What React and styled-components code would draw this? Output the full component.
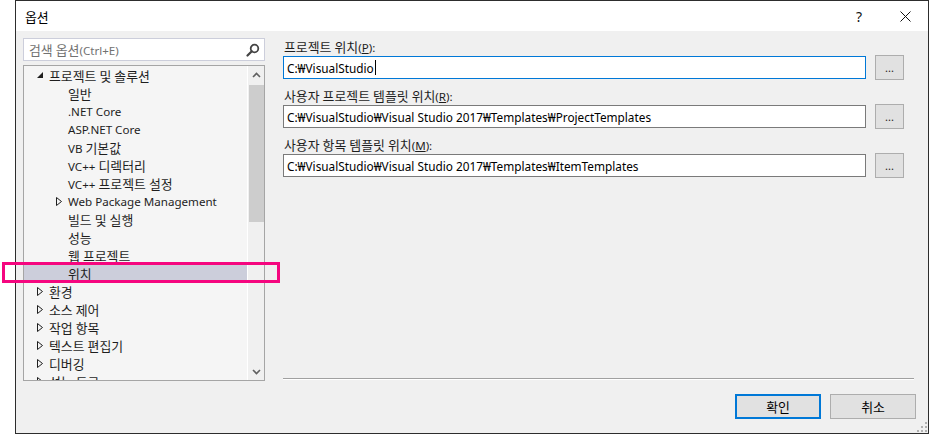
import React from "react";
import styled, { createGlobalStyle } from "styled-components";

const Global = createGlobalStyle`
  html, body { margin: 0; padding: 0; background: #ffffff; }
  body { font-family: "Noto Sans", "Noto Sans CJK KR", sans-serif; font-size: 11.6px; color: #1e1e1e; }
  * { box-sizing: border-box; }
`;

const Page = styled.div`
  position: relative;
  width: 929px;
  height: 434px;
  padding-left: 15px;
`;

const Window = styled.div`
  width: 914px;
  height: 434px;
  border: 1px solid #2d2d2d;
  display: flex;
  flex-direction: column;
  background: #f0f0f0;
`;

const TitleBar = styled.div`
  height: 30px;
  background: #ffffff;
  display: flex;
  align-items: center;
  padding-left: 9px;
  flex-shrink: 0;
`;

const Title = styled.div`
  flex: 1;
  color: #000;
`;

const TitleButton = styled.div`
  width: 46px;
  height: 30px;
  display: flex;
  align-items: center;
  justify-content: center;
  font-size: 14px;
  color: #111;
`;

const Hangul = styled.span`
  font-family: "Noto Sans CJK KR", sans-serif;
  font-size: 12.9px;
`;

const Main = styled.div`
  display: flex;
  gap: 18px;
  padding: 7px 14px 0 7px;
  height: 350px;
`;

const LeftCol = styled.div`
  width: 242px;
  display: flex;
  flex-direction: column;
  gap: 4px;
`;

const Search = styled.div`
  height: 23px;
  border: 1px solid #cccedb;
  background: #ffffff;
  display: flex;
  align-items: center;
  padding: 0 4px 0 5px;
`;

const Placeholder = styled.div`
  flex: 1;
  color: #717171;
`;

const Tree = styled.div`
  height: 316px;
  border: 1px solid #a5a5a5;
  background: #f5f5f5;
  display: flex;
  overflow: hidden;
`;

const TreeList = styled.div`
  flex: 1;
  overflow: hidden;
`;

const Row = styled.div`
  height: 18px;
  display: flex;
  align-items: center;
  padding-left: ${(p) => p.$indent}px;
  background: ${(p) => (p.$selected ? "#cccedb" : "transparent")};
  white-space: nowrap;
  color: #1e1e1e;
`;

const Expander = styled.span`
  width: 12px;
  flex-shrink: 0;
  display: inline-flex;
  align-items: center;
  justify-content: flex-start;
`;

const Scrollbar = styled.div`
  width: 17px;
  background: #f0f0f0;
  border-left: 1px solid #ffffff;
  display: flex;
  flex-direction: column;
  align-items: center;
`;

const ScrollArrow = styled.div`
  height: 17px;
  width: 100%;
  display: flex;
  align-items: center;
  justify-content: center;
`;

const Thumb = styled.div`
  width: 15px;
  height: 137px;
  margin-top: 2px;
  background: #cdcdcd;
`;

const ScrollSpacer = styled.div`
  flex: 1;
`;

const RightCol = styled.div`
  flex: 1;
  display: flex;
  flex-direction: column;
`;

const Field = styled.div`
  margin-right: 10px;
  margin-bottom: 7px;
`;

const Label = styled.div`
  height: 17px;
  line-height: 17px;
  color: #1e1e1e;
  padding-left: 1px;
  white-space: nowrap;
`;

const U = styled.span`
  text-decoration: underline;
`;

const InputRow = styled.div`
  height: 25px;
  display: flex;
  align-items: center;
  gap: 9px;
`;

const Input = styled.div`
  flex: 1;
  height: 23px;
  background: #ffffff;
  border: 1px solid ${(p) => (p.$focused ? "#0078d7" : "#7a7a7a")};
  display: flex;
  align-items: center;
  padding-left: 3px;
  font-size: 11.8px;
  color: #000;
  white-space: nowrap;
`;

const Caret = styled.span`
  display: inline-block;
  width: 1px;
  height: 15px;
  background: #000;
  margin-left: 1px;
`;

const BrowseButton = styled.div`
  width: 29px;
  height: 25px;
  background: #e1e1e1;
  border: 1px solid #adadad;
  display: flex;
  align-items: flex-end;
  justify-content: center;
  padding-bottom: 6px;
  font-size: 11px;
  line-height: 1;
`;

const Separator = styled.div`
  margin-top: auto;
  margin-bottom: 2px;
  height: 1px;
  background: #a0a0a0;
  box-shadow: 0 1px 0 #ffffff;
`;

const Footer = styled.div`
  position: relative;
  flex: 1;
  display: flex;
  justify-content: flex-end;
  align-items: flex-start;
  gap: 9px;
  padding: 13px 12px 0 0;
`;

const DialogButton = styled.div`
  width: 86px;
  height: 25px;
  background: #e1e1e1;
  border: ${(p) => (p.$default ? "2px solid #0078d7" : "1px solid #adadad")};
  display: flex;
  align-items: center;
  justify-content: center;
  color: #000;
`;

const Grip = styled.svg`
  position: absolute;
  right: 1px;
  bottom: 1px;
`;

const Annotation = styled.div`
  position: absolute;
  left: 2px;
  top: 262px;
  width: 278px;
  height: 21px;
  border: 3px solid #f5067f;
  pointer-events: none;
`;

const T = ({ children }) => {
  const parts = String(children).split(/([\uAC00-\uD7A3]+)/);
  return (
    <>
      {parts.map((p, i) =>
        /[\uAC00-\uD7A3]/.test(p) ? <Hangul key={i}>{p}</Hangul> : p
      )}
    </>
  );
};

const ExpandedTri = () => (
  <svg width="6" height="6" viewBox="0 0 6 6">
    <polygon points="6,0 6,6 0,6" fill="#1e1e1e" />
  </svg>
);

const CollapsedTri = () => (
  <svg width="6" height="9" viewBox="0 0 6 9">
    <polygon points="0.5,0.5 5.5,4.5 0.5,8.5" fill="none" stroke="#1e1e1e" strokeWidth="1" />
  </svg>
);

const Chevron = ({ up }) => (
  <svg width="9" height="6" viewBox="0 0 9 6">
    <polyline
      points={up ? "1,5 4.5,1.5 8,5" : "1,1 4.5,4.5 8,1"}
      fill="none"
      stroke="#606060"
      strokeWidth="1.6"
    />
  </svg>
);

const SearchIcon = () => (
  <svg width="14" height="14" viewBox="0 0 14 14">
    <circle cx="8.5" cy="5.5" r="3.8" fill="none" stroke="#444" strokeWidth="1.8" />
    <line x1="5.8" y1="8.2" x2="1.5" y2="12.5" stroke="#444" strokeWidth="2.2" strokeLinecap="round" />
  </svg>
);

const treeItems = [
  { text: "프로젝트 및 솔루션", level: 0, exp: "open" },
  { text: "일반", level: 1 },
  { text: ".NET Core", level: 1 },
  { text: "ASP.NET Core", level: 1 },
  { text: "VB 기본값", level: 1 },
  { text: "VC++ 디렉터리", level: 1 },
  { text: "VC++ 프로젝트 설정", level: 1 },
  { text: "Web Package Management", level: 1, exp: "closed" },
  { text: "빌드 및 실행", level: 1 },
  { text: "성능", level: 1 },
  { text: "웹 프로젝트", level: 1 },
  { text: "위치", level: 1, selected: true },
  { text: "환경", level: 0, exp: "closed" },
  { text: "소스 제어", level: 0, exp: "closed" },
  { text: "작업 항목", level: 0, exp: "closed" },
  { text: "텍스트 편집기", level: 0, exp: "closed" },
  { text: "디버깅", level: 0, exp: "closed" },
  { text: "성능 도구", level: 0, exp: "closed" },
];

const fields = [
  { label: "프로젝트 위치", key: "P", value: "C:₩VisualStudio", focused: true },
  { label: "사용자 프로젝트 템플릿 위치", key: "R", value: "C:₩VisualStudio₩Visual Studio 2017₩Templates₩ProjectTemplates" },
  { label: "사용자 항목 템플릿 위치", key: "M", value: "C:₩VisualStudio₩Visual Studio 2017₩Templates₩ItemTemplates" },
];

export default function App() {
  return (
    <>
      <Global />
      <Page>
        <Window>
          <TitleBar>
            <Title><T>옵션</T></Title>
            <TitleButton>?</TitleButton>
            <TitleButton>
              <svg width="11" height="11" viewBox="0 0 11 11">
                <line x1="0.5" y1="0.5" x2="10.5" y2="10.5" stroke="#111" strokeWidth="1" />
                <line x1="10.5" y1="0.5" x2="0.5" y2="10.5" stroke="#111" strokeWidth="1" />
              </svg>
            </TitleButton>
          </TitleBar>
          <Main>
            <LeftCol>
              <Search>
                <Placeholder><T>검색 옵션(Ctrl+E)</T></Placeholder>
                <SearchIcon />
              </Search>
              <Tree>
                <TreeList>
                  {treeItems.map((it, i) => (
                    <Row key={i} $indent={it.level === 0 ? 13 : 32} $selected={it.selected}>
                      <Expander>
                        {it.exp === "open" && <ExpandedTri />}
                        {it.exp === "closed" && <CollapsedTri />}
                      </Expander>
                      <span><T>{it.text}</T></span>
                    </Row>
                  ))}
                </TreeList>
                <Scrollbar>
                  <ScrollArrow>
                    <Chevron up />
                  </ScrollArrow>
                  <Thumb />
                  <ScrollSpacer />
                  <ScrollArrow>
                    <Chevron />
                  </ScrollArrow>
                </Scrollbar>
              </Tree>
            </LeftCol>
            <RightCol>
              {fields.map((f) => (
                <Field key={f.key}>
                  <Label>
                    <T>{f.label}</T>(<U>{f.key}</U>):
                  </Label>
                  <InputRow>
                    <Input $focused={f.focused}>
                      {f.value}
                      {f.focused && <Caret />}
                    </Input>
                    <BrowseButton>...</BrowseButton>
                  </InputRow>
                </Field>
              ))}
              <Separator />
            </RightCol>
          </Main>
          <Footer>
            <DialogButton $default><T>확인</T></DialogButton>
            <DialogButton><T>취소</T></DialogButton>
            <Grip width="10" height="10" viewBox="0 0 10 10">
              {[[8, 0], [8, 4], [4, 4], [8, 8], [4, 8], [0, 8]].map(([x, y], i) => (
                <rect key={i} x={x} y={y} width="2" height="2" fill="#b0b0b0" />
              ))}
            </Grip>
          </Footer>
        </Window>
        <Annotation />
      </Page>
    </>
  );
}
